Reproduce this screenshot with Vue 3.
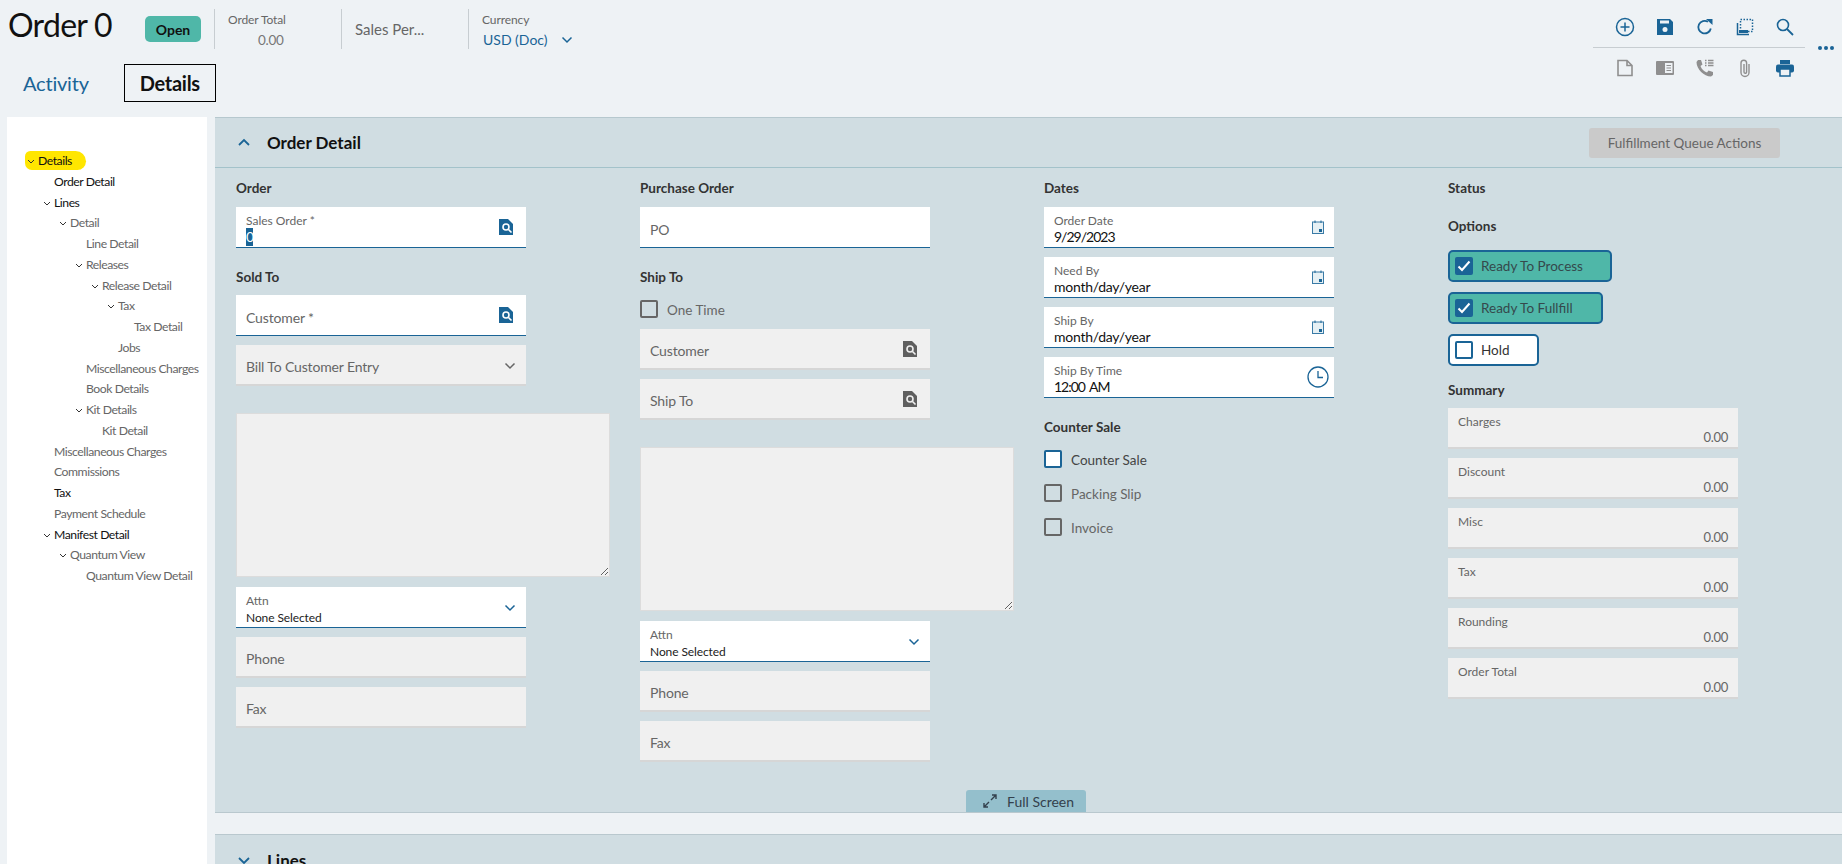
<script setup>
const tree = [
  { t: 'Details', l: 0, c: 1, d: 1 }, { t: 'Order Detail', l: 1, d: 1 }, { t: 'Lines', l: 1, c: 1, d: 1 },
  { t: 'Detail', l: 2, c: 1 }, { t: 'Line Detail', l: 3 }, { t: 'Releases', l: 3, c: 1 },
  { t: 'Release Detail', l: 4, c: 1 }, { t: 'Tax', l: 5, c: 1 }, { t: 'Tax Detail', l: 6 }, { t: 'Jobs', l: 5 },
  { t: 'Miscellaneous Charges', l: 3 }, { t: 'Book Details', l: 3 }, { t: 'Kit Details', l: 3, c: 1 },
  { t: 'Kit Detail', l: 4 }, { t: 'Miscellaneous Charges', l: 1 }, { t: 'Commissions', l: 1 }, { t: 'Tax', l: 1, d: 1 },
  { t: 'Payment Schedule', l: 1 }, { t: 'Manifest Detail', l: 1, c: 1, d: 1 }, { t: 'Quantum View', l: 2, c: 1 },
  { t: 'Quantum View Detail', l: 3 },
]
const dates = [
  { l: 'Order Date', v: '9/29/2023', n: 1 }, { l: 'Need By', v: 'month/day/year' }, { l: 'Ship By', v: 'month/day/year' },
]
const summary = ['Charges', 'Discount', 'Misc', 'Tax', 'Rounding', 'Order Total']
</script>

<template>
  <div class="app">
    <header class="top">
      <div class="top-row">
        <h1 class="title">Order 0</h1>
        <span class="badge">Open</span>
        <div class="meta meta-total"><span class="meta-l">Order Total</span><span class="meta-v">0.00</span></div>
        <div class="meta meta-sales"><span class="sales">Sales Per...</span></div>
        <div class="meta meta-cur">
          <span class="meta-l">Currency</span>
          <span class="cur-v">USD (Doc)
            <svg class="cur-chev" width="12" height="8" viewBox="0 0 12 8"><path d="M1.500 1.500 6 6l4.500-4.500" fill="none" stroke="#1a6496" stroke-width="1.500"/></svg>
          </span>
        </div>
        <div class="tools">
          <div class="tool-row">
            <svg width="20" height="20" viewBox="0 0 20 20"><circle cx="10" cy="10" r="8.500" fill="none" stroke="#1a6496" stroke-width="1.500"/><path d="M10 5.500v9M5.500 10h9" stroke="#1a6496" stroke-width="1.500"/></svg>
            <svg width="20" height="20" viewBox="0 0 20 20"><path d="M2 2h13l3 3v13H2z" fill="#1a6496"/><rect x="5" y="3.500" width="9" height="3" fill="#eef2f5"/><circle cx="10" cy="12.500" r="2.500" fill="#eef2f5"/></svg>
            <svg width="20" height="20" viewBox="0 0 20 20"><path d="M15.800 11.500A6.300 6.300 0 1 1 13 4.800" fill="none" stroke="#1a6496" stroke-width="1.800"/><path d="M11 2h6.500v6z" fill="#1a6496"/></svg>
            <svg width="20" height="20" viewBox="0 0 20 20"><path d="M2.500 6v11.500H14" fill="none" stroke="#1a6496" stroke-width="1.500"/><rect x="5.500" y="2.500" width="12" height="12" fill="none" stroke="#1a6496" stroke-width="1.500" stroke-dasharray="1.500 1.500"/><rect x="4" y="13" width="9" height="3" fill="#1a6496"/></svg>
            <svg width="20" height="20" viewBox="0 0 20 20"><circle cx="8" cy="8" r="5.500" fill="none" stroke="#1a6496" stroke-width="1.600"/><path d="m12 12 6 6" stroke="#1a6496" stroke-width="1.800"/></svg>
          </div>
          <div class="tool-line"></div>
          <div class="tool-row">
            <svg width="20" height="20" viewBox="0 0 20 20"><path d="M3 2.500h9l5 5v10H3z M12 2.500v5h5" fill="none" stroke="#8f8f8f" stroke-width="1.600"/></svg>
            <svg width="20" height="20" viewBox="0 0 20 20"><rect x="1" y="3" width="18" height="14" rx="1" fill="#8f8f8f"/><rect x="10" y="5" width="7.500" height="10" fill="#eef2f5"/><path d="M11.500 7.500h4.500M11.500 10h4.500M11.500 12.500h4.500" stroke="#8f8f8f"/></svg>
            <svg width="20" height="20" viewBox="0 0 20 20"><path d="M3 2h3l1.500 4.500-2 1.500c1 3 3.500 5.500 6.500 6.500l1.500-2 4.500 1.500v3l-2 1.500C9 18.500 1.500 11 1.500 4z" fill="#8f8f8f"/><path d="M10 2.500h1.500M13 2.500h5.500M10 5h1.500M13 5h5.500M10 7.500h1.500M13 7.500h5.500" stroke="#8f8f8f" stroke-width="1.400"/></svg>
            <svg width="20" height="20" viewBox="0 0 20 20"><path d="M14 6v8.500a4 4 0 0 1-8 0V5a2.800 2.800 0 0 1 5.600 0v9a1.300 1.300 0 0 1-2.600 0V6" fill="none" stroke="#8f8f8f" stroke-width="1.400"/></svg>
            <svg width="20" height="20" viewBox="0 0 20 20"><rect x="5" y="2" width="10" height="4" fill="#1a6496"/><rect x="1" y="6.500" width="18" height="8" rx="2" fill="#1a6496"/><rect x="5" y="11" width="10" height="7" fill="#eef2f5" stroke="#1a6496" stroke-width="1.500"/></svg>
          </div>
          <div class="dots"><i></i><i></i><i></i></div>
        </div>
      </div>
      <nav class="tabs">
        <span class="tab">Activity</span>
        <span class="tab tab-on">Details</span>
      </nav>
    </header>

    <div class="main">
      <aside class="side">
        <div v-for="(n, i) in tree" :key="i" class="node" :class="{ dark: n.d }" :style="{ paddingLeft: 16 * n.l + 'px' }">
          <span v-if="i === 0" class="hl"></span>
          <svg v-if="n.c" class="tw" width="8" height="5" viewBox="0 0 8 5"><path d="M1 1l3 3 3-3" fill="none" stroke="#333" stroke-width="1"/></svg>
          <span class="node-t">{{ n.t }}</span>
        </div>
      </aside>

      <div class="content">
        <section class="panel detail">
          <div class="p-head">
            <svg class="p-chev" width="14" height="9" viewBox="0 0 14 9"><path d="M2 7l5-5 5 5" fill="none" stroke="#1a6496" stroke-width="1.800"/></svg>
            <h2>Order Detail</h2>
            <button class="fq">Fulfillment Queue Actions</button>
          </div>
          <div class="form">
            <div class="col">
              <h3>Order</h3>
              <div class="f white">
                <label>Sales Order *</label><span class="val"><span class="sel">0</span></span>
                <svg class="ic" width="14" height="16" viewBox="0 0 14 16"><path d="M0 0h9l5 5v11H0z" fill="#1a6496"/><circle cx="7" cy="8" r="3.800" fill="#fff"/><circle cx="7" cy="8" r="2.200" fill="#1a6496"/><path d="m9.500 10.500 3 3" stroke="#fff" stroke-width="1.600"/></svg>
              </div>
              <h3 class="mt">Sold To</h3>
              <div class="f white big">
                <span class="ph">Customer *</span>
                <svg class="ic" width="14" height="16" viewBox="0 0 14 16"><path d="M0 0h9l5 5v11H0z" fill="#1a6496"/><circle cx="7" cy="8" r="3.800" fill="#fff"/><circle cx="7" cy="8" r="2.200" fill="#1a6496"/><path d="m9.500 10.500 3 3" stroke="#fff" stroke-width="1.600"/></svg>
              </div>
              <div class="f gray big gap">
                <span class="ph">Bill To Customer Entry</span>
                <svg class="ic-ch" width="12" height="8" viewBox="0 0 12 8"><path d="M1.500 1.500 6 6l4.500-4.500" fill="none" stroke="#666" stroke-width="1.500"/></svg>
              </div>
              <textarea class="ta" disabled></textarea>
              <div class="f white gap">
                <label>Attn</label><span class="val small">None Selected</span>
                <svg class="ic-ch" width="12" height="8" viewBox="0 0 12 8"><path d="M1.500 1.500 6 6l4.500-4.500" fill="none" stroke="#1a6496" stroke-width="1.500"/></svg>
              </div>
              <div class="f gray big gap"><span class="ph">Phone</span></div>
              <div class="f gray big gap"><span class="ph">Fax</span></div>
            </div>

            <div class="col">
              <h3>Purchase Order</h3>
              <div class="f white big"><span class="ph">PO</span></div>
              <h3 class="mt">Ship To</h3>
              <div class="cb first"><i class="box grayb"></i><span class="muted">One Time</span></div>
              <div class="f gray big lift">
                <span class="ph">Customer</span>
                <svg class="ic" width="14" height="16" viewBox="0 0 14 16"><path d="M0 0h9l5 5v11H0z" fill="#5f5f5f"/><circle cx="7" cy="8" r="3.800" fill="#f0f0f0"/><circle cx="7" cy="8" r="2.200" fill="#5f5f5f"/><path d="m9.500 10.500 3 3" stroke="#f0f0f0" stroke-width="1.600"/></svg>
              </div>
              <div class="f gray big gap">
                <span class="ph">Ship To</span>
                <svg class="ic" width="14" height="16" viewBox="0 0 14 16"><path d="M0 0h9l5 5v11H0z" fill="#5f5f5f"/><circle cx="7" cy="8" r="3.800" fill="#f0f0f0"/><circle cx="7" cy="8" r="2.200" fill="#5f5f5f"/><path d="m9.500 10.500 3 3" stroke="#f0f0f0" stroke-width="1.600"/></svg>
              </div>
              <textarea class="ta" disabled></textarea>
              <div class="f white gap">
                <label>Attn</label><span class="val small">None Selected</span>
                <svg class="ic-ch" width="12" height="8" viewBox="0 0 12 8"><path d="M1.500 1.500 6 6l4.500-4.500" fill="none" stroke="#1a6496" stroke-width="1.500"/></svg>
              </div>
              <div class="f gray big gap"><span class="ph">Phone</span></div>
              <div class="f gray big gap"><span class="ph">Fax</span></div>
            </div>

            <div class="col">
              <h3>Dates</h3>
              <div v-for="(d, i) in dates" :key="d.l" class="f white" :class="{ gap: i }">
                <label>{{ d.l }}</label><span class="val" :class="{ num: d.n }">{{ d.v }}</span>
                <svg class="ic-cal" width="12" height="14" viewBox="0 0 12 14"><rect x=".5" y="2" width="11" height="11.500" fill="#e6f0f4" stroke="#3a7ba6"/><path d="M3 .5v2.500M9 .5v2.500" stroke="#1a6496"/><rect x="7" y="9" width="3" height="3" fill="#1a6496"/></svg>
              </div>
              <div class="f white gap">
                <label>Ship By Time</label><span class="val num">12:00 AM</span>
                <svg class="ic-clock" width="22" height="22" viewBox="0 0 22 22"><circle cx="11" cy="11" r="10" fill="none" stroke="#1a6496" stroke-width="1.300"/><path d="M11 5v6.500h5" fill="none" stroke="#1a6496" stroke-width="1.300"/></svg>
              </div>
              <h3 class="mt">Counter Sale</h3>
              <div class="cb first"><i class="box blueb"></i><span class="dim">Counter Sale</span></div>
              <div class="cb next"><i class="box grayb"></i><span class="muted">Packing Slip</span></div>
              <div class="cb next"><i class="box grayb"></i><span class="muted">Invoice</span></div>
            </div>

            <div class="col">
              <h3>Status</h3>
              <h3 class="opts">Options</h3>
              <div class="opt on first">
                <i class="tick"><svg width="14" height="12" viewBox="0 0 14 12"><path d="M1.500 6.500 5 10l7.500-8.500" fill="none" stroke="#fff" stroke-width="2"/></svg></i>Ready To Process
              </div>
              <div class="opt on second">
                <i class="tick"><svg width="14" height="12" viewBox="0 0 14 12"><path d="M1.500 6.500 5 10l7.500-8.500" fill="none" stroke="#fff" stroke-width="2"/></svg></i>Ready To Fullfill
              </div>
              <div class="opt off"><i class="tick empty"></i>Hold</div>
              <h3 class="sum">Summary</h3>
              <div v-for="(s, i) in summary" :key="i" class="f gray s-f" :class="{ gap: i }">
                <label>{{ s }}</label><span class="s-v">0.00</span>
              </div>
            </div>
          </div>
          <div class="fs">
            <svg width="14" height="14" viewBox="0 0 14 14"><path d="M8 6l5-5M9 1h4v4M6 8l-5 5M5 13H1V9" fill="none" stroke="#33414d" stroke-width="1.400"/></svg>
            <span>Full Screen</span>
          </div>
        </section>
        <section class="panel lines">
          <div class="p-head">
            <svg class="p-chev" width="14" height="9" viewBox="0 0 14 9"><path d="M2 2l5 5 5-5" fill="none" stroke="#1a6496" stroke-width="1.800"/></svg>
            <h2>Lines</h2>
          </div>
        </section>
      </div>
    </div>
  </div>
</template>

<style>
html, body { margin: 0; height: 100%; overflow: hidden; background: #eef2f5; }
</style>

<style scoped>
.app { width: 1842px; height: 864px; overflow: hidden; background: #eef2f5; color: #111; font-family: Lato, "Noto Sans", sans-serif; }
.top { height: 117px; box-sizing: border-box; padding-left: 8px; }
.top-row { display: flex; align-items: flex-start; height: 64px; position: relative; }
.title { margin: 5px 0 0; font-size: 32px; letter-spacing: -.7px; font-weight: 400; line-height: 40px; width: 137px; }
.badge { margin-top: 16px; width: 56px; height: 26px; background: #4fb7a8; border-radius: 5px; display: flex; align-items: center; justify-content: center; font-size: 14px; font-weight: 700; }
.meta { margin-top: 9px; height: 40px; border-left: 1px solid #c7cdd1; box-sizing: border-box; display: flex; flex-direction: column; padding-left: 13px; }
.meta-total { width: 127px; margin-left: 13px; }
.meta-sales { width: 127px; justify-content: center; }
.meta-cur { width: 200px; }
.meta-l { font-size: 12px; letter-spacing: -.1px; line-height: 22px; color: #666; }
.meta-v { font-size: 13.500px; letter-spacing: -.3px; line-height: 14px; color: #777; padding-left: 30px; margin-top: 2px; }
.sales { font-size: 15px; color: #666; }
.cur-v { font-size: 14px; line-height: 14px; color: #1a6496; margin-top: 2px; padding-left: 1px; }
.cur-chev { margin-left: 10px; vertical-align: 1px; }
.tools { position: absolute; left: 1585px; top: 17px; width: 212px; display: flex; flex-direction: column; align-items: stretch; }
.tool-row { display: flex; height: 20px; padding-left: 22px; gap: 20px; }
.tool-line { height: 1px; background: #c7cdd1; margin: 10px 0; }
.dots { position: absolute; left: 225px; top: 29px; display: flex; gap: 2px; }
.dots i { width: 4px; height: 4px; border-radius: 50%; background: #1a6496; }
.tabs { display: flex; align-items: center; height: 38px; padding-left: 15px; }
.tab { font-size: 20px; letter-spacing: -.2px; color: #1a6496; }
.tab-on { margin-left: 35px; width: 92px; height: 38px; box-sizing: border-box; border: 1px solid #000; color: #111; font-weight: 700; letter-spacing: -.3px; display: flex; align-items: center; justify-content: center; }
.main { display: flex; height: 747px; padding-left: 7px; }
.side { width: 200px; margin-right: 8px; background: #fff; box-sizing: border-box; padding: 34px 0 0 31px; flex: none; }
.node { position: relative; height: 20.750px; line-height: 20.750px; font-size: 12.200px; letter-spacing: -.45px; color: #666; white-space: nowrap; }
.node.dark { color: #111; }
.node-t { position: relative; }
.tw { position: relative; float: left; margin: 8px 0 0 -11px; }
.hl { position: absolute; left: -13px; top: 0; width: 61px; height: 19px; background: #ffe600; border-radius: 6px 12px 10px 8px; }
.content { flex: 1; min-width: 0; }
.panel { background: #d0dde2; }
.detail { height: 696px; border-top: 1px solid #b6c8ce; border-bottom: 1px solid #b9c8ce; box-sizing: border-box; position: relative; }
.lines { margin-top: 21px; height: 30px; border-top: 1px solid #b9c8ce; overflow: hidden; }
.p-head { height: 50px; box-sizing: border-box; border-bottom: 1px solid #a3c2ca; display: flex; align-items: center; padding-left: 22px; }
.p-head h2 { margin: 0 0 0 16px; font-size: 17px; font-weight: 700; color: #111; }
.lines .p-head { height: 51px; }
.fq { margin-left: auto; margin-right: 62px; width: 191px; height: 30px; background: #cacaca; border: 0; border-radius: 3px; font: inherit; font-size: 13.500px; color: #666; }
.form { display: grid; grid-template-columns: repeat(4, 290px); column-gap: 114px; padding: 10px 0 0 21px; }
.col { display: flex; flex-direction: column; min-width: 0; }
h3 { margin: 0 0 9px; height: 20px; line-height: 20px; font-size: 13.500px; font-weight: 700; color: #333; }
h3.mt { margin-top: 18px; padding-top: 1px; box-sizing: border-box; }
h3.opts { margin-top: 9px; }
h3.sum { margin: 14px 0 8px; }
.f { position: relative; height: 41px; box-sizing: border-box; flex: none; padding: 6px 10px 0; display: flex; flex-direction: column; }
.white { background: #fff; border-bottom: 1.500px solid #1a6496; }
.gray { background: #f0f0f0; border-bottom: 2px solid #d6d6d6; }
.gap { margin-top: 9px; }
.lift { margin-top: 11px; }
.f label { font-size: 12px; line-height: 15px; color: #666; }
.val { font-size: 14px; letter-spacing: -.25px; line-height: 18px; color: #111; }
.val.num { letter-spacing: -1px; word-spacing: 2px; }
.val.small { font-size: 12px; letter-spacing: -.1px; line-height: 15px; margin-top: 2px; font-weight: 400; color: #222; }
.sel { display: inline-block; background: #1a6496; color: #fff; width: 7px; overflow: hidden; }
.big { padding-top: 0; justify-content: center; }
.ph { font-size: 14px; letter-spacing: -.15px; color: #666; position: relative; top: 2px; }
.ic { position: absolute; right: 13px; top: 12px; }
.ic-ch { position: absolute; right: 10px; top: 17px; }
.ic-cal { position: absolute; right: 10px; top: 13px; }
.ic-clock { position: absolute; right: 5px; top: 9px; }
.ta { display: block; width: 374px; height: 164px; margin: 27px 0 1px; box-sizing: border-box; background: #f0f0f0; border: 1px solid #dcdcdc; resize: both; flex: none; }
.cb { display: flex; align-items: center; height: 18px; font-size: 13.500px; }
.cb span { position: relative; top: 1px; }
.cb.first { margin-top: 5px; }
.cb.next { margin-top: 16px; }
.box { width: 18px; height: 18px; box-sizing: border-box; border-radius: 2px; margin-right: 9px; flex: none; }
.grayb { border: 2px solid #666; }
.blueb { border: 2px solid #1a6496; background: #fff; }
.muted { color: #666; }
.dim { color: #444; }
.opt { height: 32px; box-sizing: border-box; border: 2px solid #1a6496; border-radius: 5px; display: inline-flex; align-items: center; align-self: flex-start; padding-left: 5px; font-size: 13.500px; margin-top: 10px; flex: none; }
.opt.first { margin-top: 5px; }
.on { background: #4fb7a8; color: #35494c; width: 164px; }
.on.second { width: 155px; }
.off { background: #fff; color: #333; width: 91px; }
.tick { width: 18px; height: 18px; background: #1a6496; border-radius: 2px; margin-right: 8px; display: flex; align-items: center; justify-content: center; box-sizing: border-box; }
.tick.empty { background: #fff; border: 2px solid #1a6496; }
.s-f { padding-top: 6px; }
.s-f label { color: #666; font-size: 12px; }
.s-v { position: absolute; right: 10px; bottom: 2px; font-size: 13px; letter-spacing: -.3px; color: #666; }
.fs { position: absolute; left: 751px; bottom: 0; width: 120px; height: 22px; background: #94bfcc; border-radius: 3px 3px 0 0; display: flex; align-items: center; box-sizing: border-box; padding-left: 17px; gap: 10px; font-size: 14px; color: #33414d; }
</style>
